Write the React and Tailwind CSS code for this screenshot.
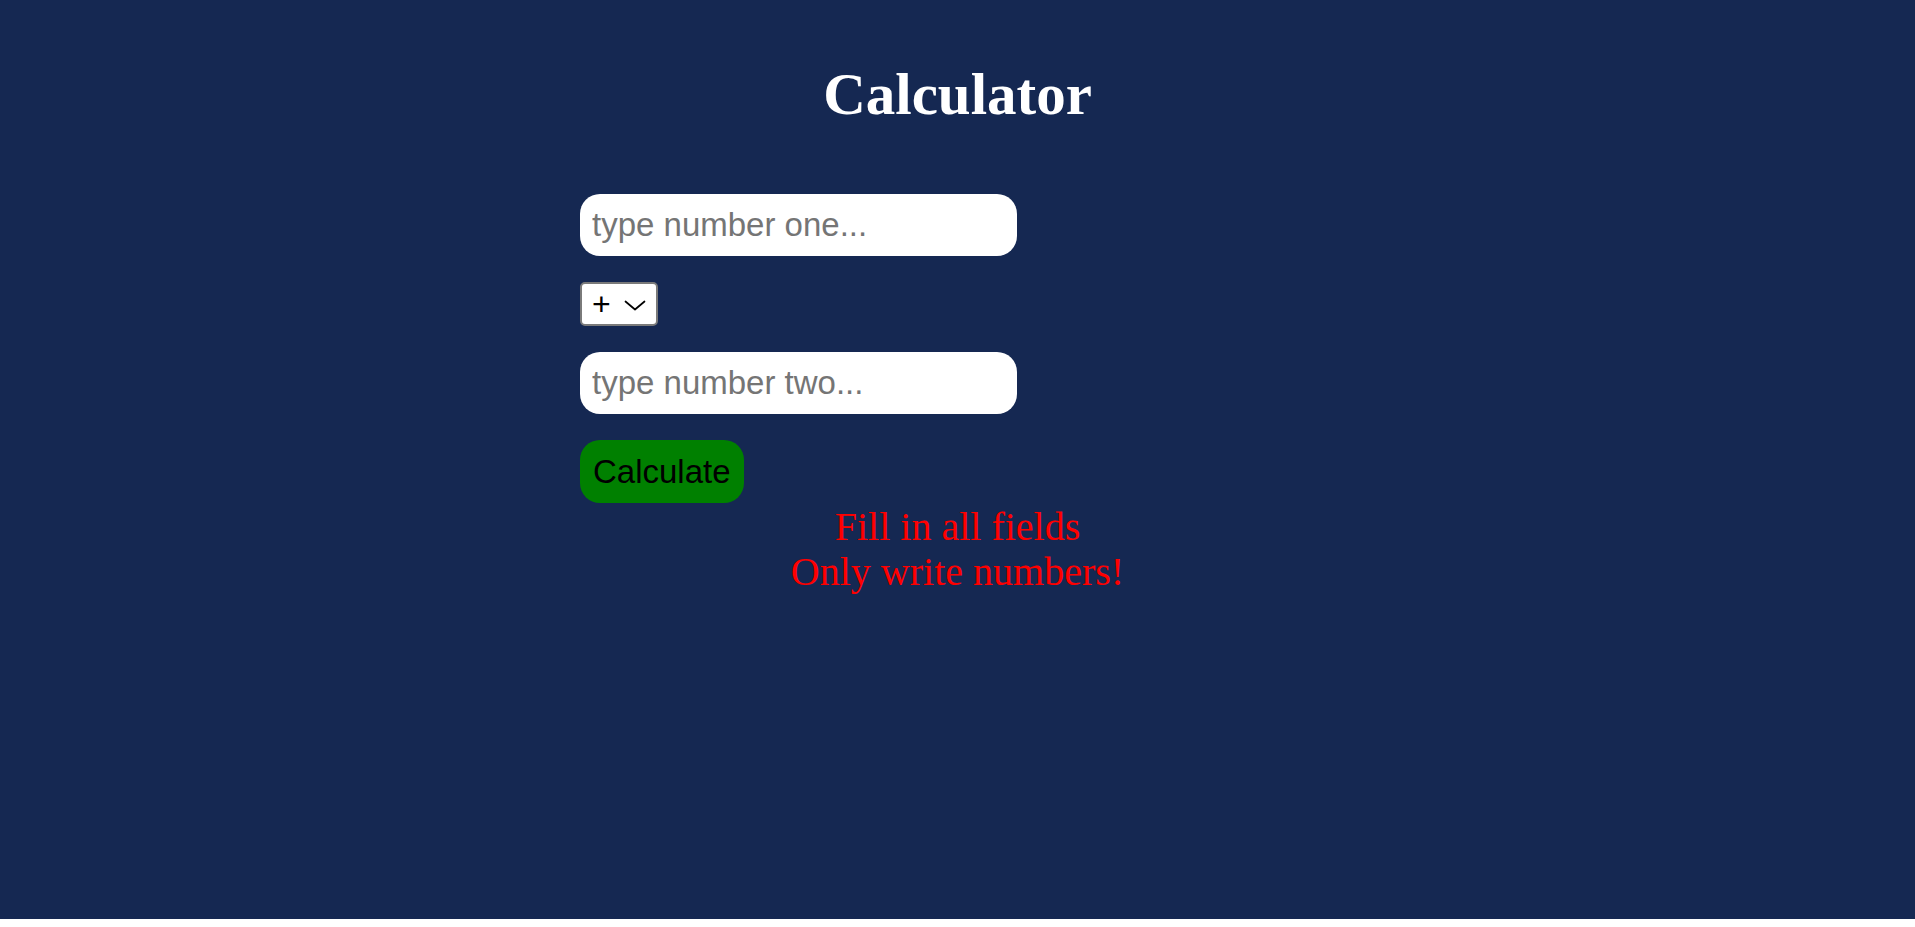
import React from "react";

export default function App() {
  return (
    <div className="w-full">
      <div className="h-[919px] w-full bg-[#152852]">
        <div className="mx-auto flex w-[755px] flex-col pt-[61px]">
          <h1 className="text-center text-[59px] font-bold leading-[66px] text-white [font-family:'Liberation_Serif','Times_New_Roman',serif]">
            Calculator
          </h1>
          <div className="mt-[67px] flex flex-col items-start gap-[26px] [font-family:'Liberation_Sans',Arial,sans-serif]">
            <input
              type="text"
              placeholder="type number one..."
              className="h-[62px] w-[437px] rounded-[20px] bg-white px-[12px] text-[33px] text-black outline-none placeholder:text-[#757575]"
            />
            <div className="relative h-[44px] w-[78px]">
              <select
                defaultValue="+"
                className="h-full w-full appearance-none rounded-[5px] border-2 border-[#7a7a7a] bg-white pl-[10px] text-[32px] leading-none text-black outline-none"
              >
                <option value="+">+</option>
                <option value="-">-</option>
                <option value="*">*</option>
                <option value="/">/</option>
              </select>
              <svg
                className="pointer-events-none absolute left-[44px] top-[18px]"
                width="22"
                height="11"
                viewBox="0 0 22 11"
                fill="none"
              >
                <polyline
                  points="1.5,1.5 11,9.5 20.5,1.5"
                  stroke="#000"
                  strokeWidth="1.7"
                  strokeLinecap="round"
                  strokeLinejoin="round"
                />
              </svg>
            </div>
            <input
              type="text"
              placeholder="type number two..."
              className="h-[62px] w-[437px] rounded-[20px] bg-white px-[12px] text-[33px] text-black outline-none placeholder:text-[#757575]"
            />
            <button className="h-[63px] rounded-[20px] bg-[#008000] px-[13px] text-[33px] text-black">
              Calculate
            </button>
          </div>
          <div className="pt-[1px] text-center text-[40px] leading-[45px] text-[#ff0000] [font-family:'Liberation_Serif','Times_New_Roman',serif]">
            <p>Fill in all fields</p>
            <p>Only write numbers!</p>
          </div>
        </div>
      </div>
    </div>
  );
}
